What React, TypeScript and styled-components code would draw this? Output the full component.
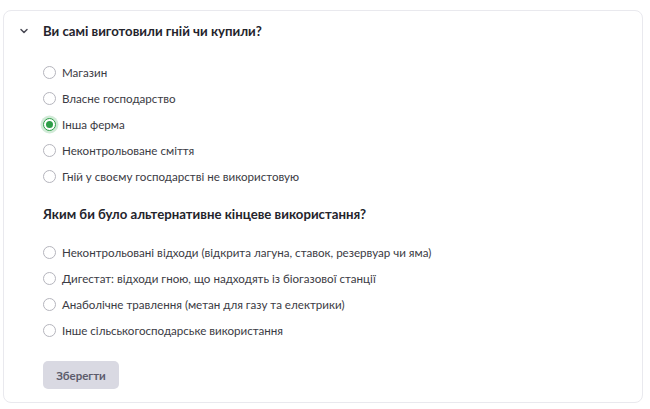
import React, { useState } from 'react';
import styled, { createGlobalStyle } from 'styled-components';

const GlobalStyle = createGlobalStyle`
  body {
    margin: 0;
    background: #ffffff;
    font-family: Lato, "Noto Sans", sans-serif;
    color: #2b2b33;
  }
`;

const Page = styled.div`
  padding: 10px 7px 6px 3px;
`;

const Card = styled.div`
  border: 1px solid #e9e9ee;
  border-radius: 8px;
  padding: 10px 0 13px 0;
  box-sizing: border-box;
  height: 393px;
`;

const Header = styled.div`
  display: flex;
  align-items: center;
  height: 20px;
  padding-left: 15px;
  gap: 14px;
`;

const Chevron = styled.svg`
  width: 10px;
  height: 10px;
  color: #4a4a55;
`;

const Body = styled.div`
  padding-left: 39px;
  display: flex;
  flex-direction: column;
`;

const Title = styled.h3`
  margin: 0;
  font-size: 13.2px;
  line-height: 20px;
  font-weight: 700;
  color: #24242c;
`;

const Options = styled.div<{ $top: number; $bottom: number }>`
  display: flex;
  flex-direction: column;
  margin: ${p => p.$top}px 0 ${p => p.$bottom}px;
`;

const Option = styled.label`
  display: flex;
  align-items: center;
  gap: 6px;
  height: 26px;
  font-size: 11.6px;
  color: #3b3b44;
  cursor: pointer;
`;

const Radio = styled.span<{ $checked: boolean }>`
  width: 13px;
  height: 13px;
  border-radius: 50%;
  box-sizing: border-box;
  border: 1px solid ${p => (p.$checked ? '#2e9e48' : '#b5b5bd')};
  background: #fff;
  display: flex;
  align-items: center;
  justify-content: center;
  flex-shrink: 0;
  box-shadow: ${p => (p.$checked ? '0 0 0 2.5px rgba(46, 158, 72, 0.22)' : 'none')};
  &::after {
    content: '';
    width: 7px;
    height: 7px;
    border-radius: 50%;
    background: ${p => (p.$checked ? '#2e9e48' : 'transparent')};
  }
`;

const SaveButton = styled.button`
  align-self: flex-start;
  width: 76px;
  height: 28px;
  border: none;
  border-radius: 5px;
  background: #d9d9e2;
  color: #5c5c6c;
  font-family: Lato, "Noto Sans", sans-serif;
  font-size: 11.5px;
  font-weight: 700;
`;

const SOURCES = [
  'Магазин',
  'Власне господарство',
  'Інша ферма',
  'Неконтрольоване сміття',
  'Гній у своєму господарстві не використовую',
];

const USES = [
  'Неконтрольовані відходи (відкрита лагуна, ставок, резервуар чи яма)',
  'Дигестат: відходи гною, що надходять із біогазової станції',
  'Анаболічне травлення (метан для газу та електрики)',
  'Інше сільськогосподарське використання',
];

const App: React.FC = () => {
  const [source, setSource] = useState('Інша ферма');
  const [use, setUse] = useState('');

  return (
    <Page>
      <GlobalStyle />
      <Card>
        <Header>
          <Chevron viewBox="0 0 10 10" fill="none">
            <path d="M2 3.5 L5 6.5 L8 3.5" stroke="currentColor" strokeWidth="1.5" strokeLinecap="round" strokeLinejoin="round" />
          </Chevron>
          <Title>Ви самі виготовили гній чи купили?</Title>
        </Header>
        <Body>
          <Options $top={18} $bottom={15}>
            {SOURCES.map(s => (
              <Option key={s} onClick={() => setSource(s)}>
                <Radio $checked={source === s} />
                {s}
              </Option>
            ))}
          </Options>
          <Title>Яким би було альтернативне кінцеве використання?</Title>
          <Options $top={15} $bottom={18}>
            {USES.map(u => (
              <Option key={u} onClick={() => setUse(u)}>
                <Radio $checked={use === u} />
                {u}
              </Option>
            ))}
          </Options>
          <SaveButton>Зберегти</SaveButton>
        </Body>
      </Card>
    </Page>
  );
};

export default App;
